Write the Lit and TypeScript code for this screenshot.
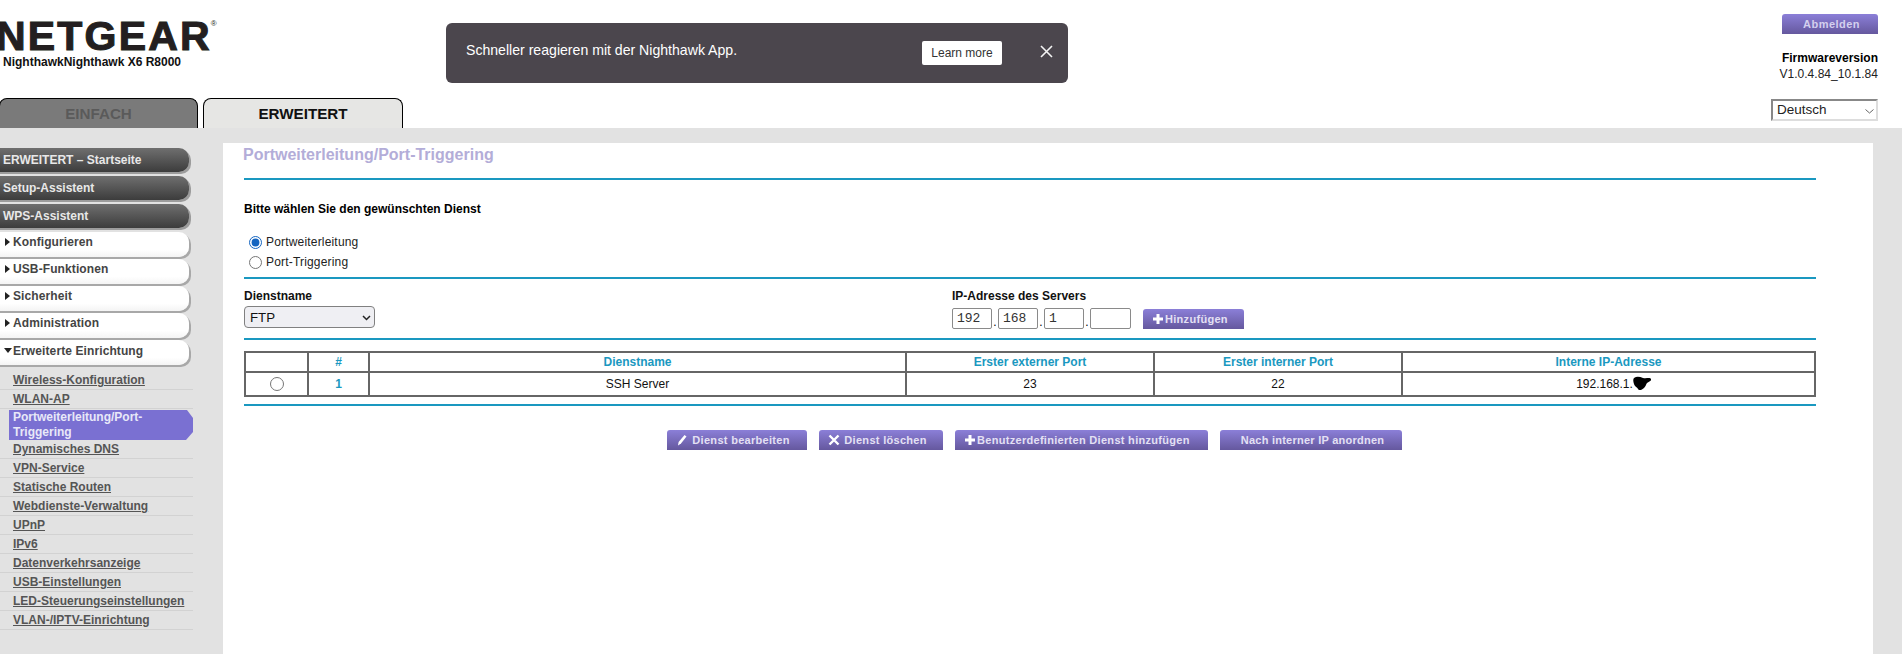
import { LitElement, html, css } from "lit";
import { customElement } from "lit/decorators.js";

const arial = css(['"Liberation Sans", Arial, sans-serif'] as any);

const plus = html`<svg class="ico" width="12" height="12" viewBox="0 0 12 12"><path d="M4.500 1h3v3.500H11v3H7.500V11h-3V7.500H1v-3h3.500z" fill="#fff"/></svg>`;
const cross = html`<svg class="ico" width="12" height="12" viewBox="0 0 12 12"><path d="M1.500 1.500l9 9M10.500 1.500l-9 9" stroke="#fff" stroke-width="2.400" fill="none"/></svg>`;
const pencil = html`<svg class="ico" width="12" height="12" viewBox="0 0 12 12"><path d="M8.500 1l2 1.500L5 9.500l-3 2 .6-3.500z" fill="#fff"/></svg>`;

@customElement("app-root")
export class AppRoot extends LitElement {
  static styles = css`
    :host { display: block; width: 1902px; height: 654px; overflow: hidden; background: #e2e2e2; font-family: ${arial}; font-size: 12px; color: #000; }
    * { box-sizing: border-box; }
    header { height: 128px; background: #fff; display: flex; }
    .brand { width: 446px; flex: none; display: flex; flex-direction: column; overflow: hidden; }
    .logo { margin: 17px 0 0 -4px; height: 38px; font-size: 41px; line-height: 38px; font-weight: 700; letter-spacing: 2.200px; color: #231f20; -webkit-text-stroke: 1.100px #231f20; white-space: nowrap; }
    .logo sup { font-size: 8px; letter-spacing: 0; -webkit-text-stroke: 0; vertical-align: 24px; line-height: 0; margin-left: -1px; font-weight: 400; }
    .model { margin: 0 0 0 3px; font-weight: 700; font-size: 12px; line-height: 14px; height: 14px; color: #111; }
    .tabs { display: flex; gap: 5px; margin-top: 29px; margin-left: -1px; }
    .tab { width: 199px; height: 30px; border: 1px solid #000; border-bottom: 0; border-radius: 8px 8px 0 0; display: flex; align-items: center; justify-content: center; font-weight: 700; font-size: 15.200px; }
    .tab.off { background: #7a7a7a; color: #5a5a5a; }
    .tab.on { width: 200px; background: #e6e6e4; color: #111; }
    .banner { width: 622px; height: 60px; margin-top: 23px; background: #4b464d; border-radius: 6px; display: flex; align-items: center; color: #fff; padding: 0 0 0 20px; font-size: 14.100px; flex: none; }
    .banner .msg { width: 456px; margin-top: -7px; }
    .learn { width: 80px; height: 24px; background: #fff; color: #333; border-radius: 2px; font-size: 12px; display: flex; align-items: center; justify-content: center; }
    .close { margin-left: 38px; display: flex; margin-top: -4px; }
    .account { margin-left: auto; margin-right: 24px; display: flex; flex-direction: column; align-items: flex-end; }
    .logout { width: 96px; height: 20px; margin-top: 14px; padding-left: 3px; border-radius: 3px 3px 0 0; background: linear-gradient(#8b7fd8, #65589e); color: #d4d0ee; font-weight: 700; font-size: 11px; letter-spacing: .45px; display: flex; align-items: center; justify-content: center; }
    .fw-t { margin-top: 17px; font-weight: 700; line-height: 15px; }
    .fw-v { line-height: 15px; color: #222; margin-top: 1px; letter-spacing: .03px; }
    .lang { appearance: none; margin-top: 17px; width: 107px; height: 22px; font: 13.500px ${arial}; color: #222; background: #fff url("data:image/svg+xml,%3Csvg xmlns='http://www.w3.org/2000/svg' width='9' height='5'%3E%3Cpath d='M.5.500l4 3.500 4-3.500' fill='none' stroke='%23666'/%3E%3C/svg%3E") no-repeat 92px 8px; border: 2px solid; border-color: #888 #ddd #ddd #888; border-radius: 0; padding: 0 0 2px 4px; }
    .body { display: flex; height: 526px; }
    nav { width: 223px; flex: none; padding-top: 20px; overflow: hidden; }
    .dark, .light { display: flex; align-items: center; margin-left: -12px; width: 201px; border-radius: 10px; font-weight: 700; white-space: nowrap; }
    .dark { height: 24px; padding-left: 15px; margin-bottom: 4px; background: linear-gradient(#6f6f6f, #3c3c3c); color: #e8e8e8; box-shadow: 2px 2px 0 #9c9c9c; }
    .light { height: 25px; padding: 0 0 6px 17px; margin-bottom: 2px; background: linear-gradient(#fff 70%, #f4f4f4); color: #444; box-shadow: 2px 2px 0 #a8a8a8; letter-spacing: .1px; }
    .light.last { padding-bottom: 4px; margin-top: 1px; margin-bottom: 6px; }
    .tri { width: 0; height: 0; border-style: solid; border-color: transparent; margin-right: 3px; flex: none; }
    .tri.r { border-width: 4px 0 4px 5px; border-left-color: #222; }
    .tri.d { margin-right: 1px; margin-left: -1px; border-width: 5px 4px 0 4px; border-top-color: #222; }
    .sub { width: 193px; }
    .sub a { display: flex; align-items: center; height: 19px; padding-left: 13px; font-weight: 700; color: #555; text-decoration: underline; border-bottom: 1px solid #d2d2d2; }
    .sub a.cur { height: 30px; margin: 1px 0 0 9px; padding: 0 10px 0 4px; line-height: 15px; background: #7a70d2; color: #e8e8f8; text-decoration: none; border: 0; clip-path: polygon(0 0, 178px 0, 184px 8px, 184px 22px, 177px 30px, 0 30px); }
    main { width: 1650px; margin-top: 15px; background: #fff; padding-left: 21px; flex: none; }
    .inner { width: 1572px; }
    h1 { margin: 0 0 0 -1px; height: 24px; font-size: 16px; line-height: 24px; font-weight: 700; color: #b3add8; }
    .rule { height: 2px; background: #1a98c0; }
    .pick { font-weight: 700; line-height: 14px; margin: 22px 0 16px; }
    .radio { display: flex; align-items: center; height: 20px; padding-left: 5px; color: #222; letter-spacing: .18px; }
    .radio input { margin: 0 4px 0 0; width: 13px; height: 13px; accent-color: #1565c0; }
    .form { display: flex; height: 59px; padding-top: 10px; }
    .col { width: 708px; flex: none; }
    .lbl { font-weight: 700; line-height: 14px; height: 14px; color: #111; }
    .svc { appearance: none; display: block; margin-top: 3px; width: 131px; height: 22px; font: 13.300px ${arial}; background: #efeff3 url("data:image/svg+xml,%3Csvg xmlns='http://www.w3.org/2000/svg' width='9' height='6'%3E%3Cpath d='M1 1l3.500 3.500L8 1' fill='none' stroke='%23222' stroke-width='1.500'/%3E%3C/svg%3E") no-repeat 117px 8px; border: 1px solid #808080; border-radius: 4px; color: #111; padding-left: 5px; }
    .ip { display: flex; align-items: flex-end; margin-top: 5px; }
    .ip input { width: 40px; height: 21px; font: 13px "Liberation Mono", monospace; border: 1px solid #8a8a8a; border-radius: 2px; padding: 0 0 0 4px; color: #333; }
    .ip span { width: 6px; text-align: center; line-height: 14px; }
    .ip .w { width: 41px; }
    .btn { display: inline-flex; align-items: center; justify-content: center; height: 20px; border-radius: 3px 3px 0 0; background: linear-gradient(#8b7fd8, #65589e); color: #e4e0f4; font-weight: 700; font-size: 11px; letter-spacing: .3px; white-space: nowrap; flex: none; }
    .btn.start { justify-content: flex-start; }
    .ico { flex: none; margin-right: 1px; }
    .add { width: 101px; margin-left: 12px; padding-left: 9px; }
    .edit { width: 140px; padding-left: 9px; }
    .del { width: 124px; margin-left: 12px; padding-left: 9px; }
    .custom { width: 253px; margin-left: 12px; padding-left: 9px; }
    .order { width: 182px; margin-left: 12px; padding-left: 3px; letter-spacing: .25px; }
    table { margin-top: 11px; width: 1572px; border-collapse: collapse; table-layout: fixed; border: 2px solid #666; }
    th, td { border: 2px solid #666; text-align: center; padding: 0; font-size: 12px; }
    th { height: 20px; color: #1a98c0; font-weight: 700; }
    td { height: 24px; color: #111; }
    td.num { color: #1a98c0; font-weight: 700; }
    td input { margin: 3px 0 0 0; width: 14px; height: 14px; }
    .c1 { width: 63px; } .c2 { width: 61px; } .c3 { width: 537px; } .c4, .c5 { width: 248px; }
    .ipv { position: relative; display: inline-block; padding-right: 8px; }
    .blot { position: absolute; left: 56px; top: -1px; }
    .rule.end { margin-top: 7px; }
    .actions { display: flex; margin: 24px 0 0 423px; }
    .r1 { margin-top: 11px; } .r2 { margin-top: 5px; }
  `;

  render() {
    const items = ["Dynamisches DNS", "VPN-Service", "Statische Routen", "Webdienste-Verwaltung", "UPnP", "IPv6", "Datenverkehrsanzeige", "USB-Einstellungen", "LED-Steuerungseinstellungen", "VLAN-/IPTV-Einrichtung"];
    return html`
      <header>
        <div class="brand">
          <div class="logo">NETGEAR<sup>®</sup></div>
          <div class="model">NighthawkNighthawk X6 R8000</div>
          <div class="tabs"><div class="tab off">EINFACH</div><div class="tab on">ERWEITERT</div></div>
        </div>
        <div class="banner">
          <div class="msg">Schneller reagieren mit der Nighthawk App.</div>
          <div class="learn">Learn more</div>
          <div class="close"><svg width="13" height="13" viewBox="0 0 13 13"><path d="M1 1l11 11M12 1L1 12" stroke="#f4f4f4" stroke-width="1.600" fill="none"/></svg></div>
        </div>
        <div class="account">
          <div class="logout">Abmelden</div>
          <div class="fw-t">Firmwareversion</div>
          <div class="fw-v">V1.0.4.84_10.1.84</div>
          <select class="lang"><option>Deutsch</option></select>
        </div>
      </header>
      <div class="body">
        <nav>
          <div class="dark">ERWEITERT – Startseite</div>
          <div class="dark">Setup-Assistent</div>
          <div class="dark">WPS-Assistent</div>
          <div class="light"><i class="tri r"></i>Konfigurieren</div>
          <div class="light"><i class="tri r"></i>USB-Funktionen</div>
          <div class="light"><i class="tri r"></i>Sicherheit</div>
          <div class="light"><i class="tri r"></i>Administration</div>
          <div class="light last"><i class="tri d"></i>Erweiterte Einrichtung</div>
          <div class="sub">
            <a>Wireless-Konfiguration</a>
            <a>WLAN-AP</a>
            <a class="cur">Portweiterleitung/Port-<br />Triggering</a>
            ${items.map((i) => html`<a>${i}</a>`)}
          </div>
        </nav>
        <main>
          <div class="inner">
            <h1>Portweiterleitung/Port-Triggering</h1>
            <div class="rule r1"></div>
            <div class="pick">Bitte wählen Sie den gewünschten Dienst</div>
            <label class="radio"><input type="radio" name="t" checked />Portweiterleitung</label>
            <label class="radio"><input type="radio" name="t" />Port-Triggering</label>
            <div class="rule r2"></div>
            <div class="form">
              <div class="col">
                <div class="lbl">Dienstname</div>
                <select class="svc"><option>FTP</option></select>
              </div>
              <div>
                <div class="lbl">IP-Adresse des Servers</div>
                <div class="ip">
                  <input value="192" /><span>.</span><input value="168" /><span>.</span><input value="1" /><span>.</span><input class="w" value="" />
                  <div class="btn start add">${plus}Hinzufügen</div>
                </div>
              </div>
            </div>
            <div class="rule"></div>
            <table>
              <colgroup><col class="c1" /><col class="c2" /><col class="c3" /><col class="c4" /><col class="c5" /><col /></colgroup>
              <tr><th></th><th>#</th><th>Dienstname</th><th>Erster externer Port</th><th>Erster interner Port</th><th>Interne IP-Adresse</th></tr>
              <tr>
                <td><input type="radio" /></td><td class="num">1</td><td>SSH Server</td><td>23</td><td>22</td>
                <td><span class="ipv">192.168.1.<svg class="blot" width="19" height="15" viewBox="0 0 19 15"><path d="M2 2c3-2 6-1 9 0s7-1 8 1-3 3-4 4-1 3-3 5-5 3-6 1-3-2-4-5-1-5 0-6z" fill="#000"/></svg></span></td>
              </tr>
            </table>
            <div class="rule end"></div>
            <div class="actions">
              <div class="btn start edit">${pencil}&nbsp;Dienst bearbeiten</div>
              <div class="btn start del">${cross}&nbsp;Dienst löschen</div>
              <div class="btn start custom">${plus}Benutzerdefinierten Dienst hinzufügen</div>
              <div class="btn order">Nach interner IP anordnen</div>
            </div>
          </div>
        </main>
      </div>
    `;
  }
}
